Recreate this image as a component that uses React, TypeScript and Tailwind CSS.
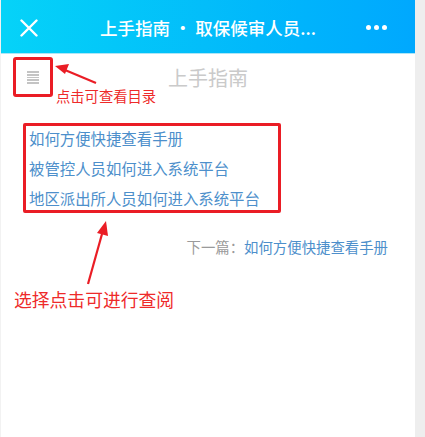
import React from "react";

const RED = "#ea1d25";

export default function App() {
  return (
    <div
      className="flex w-[425px] h-[437px] bg-white overflow-hidden"
      style={{ fontFamily: '"Noto Sans CJK SC", "Noto Sans", sans-serif' }}
    >
      <div className="w-[1px] bg-[#f2f2f2]" />
      <div className="relative w-[414px] flex flex-col bg-white">
        {/* Header */}
        <div className="relative h-[53px] flex items-center bg-gradient-to-r from-[#06d3f8] via-[#03bdfa] to-[#00a8fe] border-b border-[#aee6f6] box-content">
          <div className="w-[53px] flex items-center justify-center pl-[2px] pt-[2px]">
            <svg width="18" height="18" viewBox="0 0 18 18">
              <path d="M1.5 1.5 L16.5 16.5 M16.5 1.5 L1.5 16.5" stroke="#fff" strokeWidth="2.4" strokeLinecap="round" />
            </svg>
          </div>
          <div className="flex-1 text-center text-white text-[17.5px] font-medium pt-[3px] whitespace-nowrap">
            上手指南 · 取保候审人员...
          </div>
          <div className="w-[53px] flex items-center gap-[3px] pl-[4px] pt-[2px]">
            <span className="w-[5px] h-[5px] rounded-full bg-white" />
            <span className="w-[5px] h-[5px] rounded-full bg-white" />
            <span className="w-[5px] h-[5px] rounded-full bg-white" />
          </div>
        </div>

        {/* Title row */}
        <div className="grid grid-cols-[1fr_auto_1fr] items-center mt-[3px]">
          <div className="pl-[12px]">
            <div
              className="w-[40px] h-[40px] rounded-[3px] border-[3px] flex flex-col items-center justify-center gap-[1.2px] pt-[1px]"
              style={{ borderColor: RED }}
            >
              <span className="w-[12px] h-[1.6px] bg-[#c4c4c4]" />
              <span className="w-[12px] h-[1.6px] bg-[#c4c4c4]" />
              <span className="w-[12px] h-[1.6px] bg-[#c4c4c4]" />
              <span className="w-[12px] h-[1.6px] bg-[#c4c4c4]" />
              <span className="w-[12px] h-[1.6px] bg-[#c4c4c4]" />
            </div>
          </div>
          <div className="text-[20px] text-[#cacaca] pt-[2px]">上手指南</div>
          <div />
        </div>

        {/* Links */}
        <div
          className="mt-[26px] ml-[22px] w-[258px] border-[3px] rounded-[2px] flex flex-col gap-[6px] pl-[3px]"
          style={{ borderColor: RED }}
        >
          <a className="text-[15.4px] leading-[24px] text-[#4d8fcb]">如何方便快捷查看手册</a>
          <a className="text-[15.4px] leading-[24px] text-[#4d8fcb]">被管控人员如何进入系统平台</a>
          <a className="text-[15.4px] leading-[24px] text-[#4d8fcb]">地区派出所人员如何进入系统平台</a>
        </div>

        {/* Next */}
        <div className="mt-[24px] flex justify-end pr-[27px] text-[14.4px] leading-[20px]">
          <span className="text-[#9a9a9a]">下一篇：</span>
          <span className="text-[#4d8fcb]">如何方便快捷查看手册</span>
        </div>

        {/* Annotations */}
        <svg className="absolute left-0 top-0 pointer-events-none" width="414" height="437">
          <line x1="95" y1="83" x2="64" y2="70" stroke={RED} strokeWidth="2.2" />
          <polygon points="54,66 68,64 64,74" fill={RED} />
          <line x1="87" y1="284" x2="101" y2="234" stroke={RED} strokeWidth="2.2" />
          <polygon points="105,221 107,236 96,233" fill={RED} />
        </svg>
        <div className="absolute left-[55px] top-[87px] text-[14.3px] leading-[18px]" style={{ color: "#ee2a2a" }}>
          点击可查看目录
        </div>
        <div className="absolute left-[13px] top-[286px] text-[17.8px] leading-[26px]" style={{ color: "#ee2a2a" }}>
          选择点击可进行查阅
        </div>
      </div>
      <div className="w-[10px] bg-[#eeeeee]" />
    </div>
  );
}
